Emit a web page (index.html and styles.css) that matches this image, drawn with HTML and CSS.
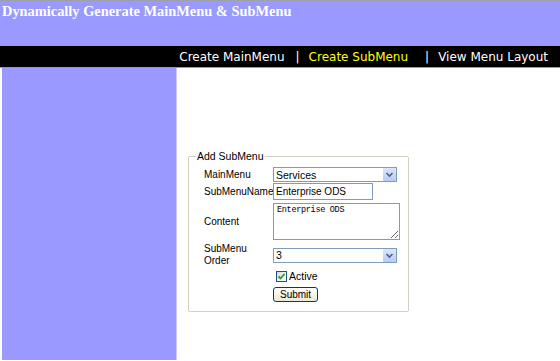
FILE: index.html
```html
<!DOCTYPE html>
<html lang="en">
<head>
  <meta charset="UTF-8">
  <title>Dynamically Generate MainMenu &amp; SubMenu</title>
  <link rel="stylesheet" href="styles.css">
</head>
<body>
  <div class="header">
    <h1>Dynamically Generate MainMenu &amp; SubMenu</h1>
  </div>
  <div class="nav">
    <a href="#" class="nav-link">Create MainMenu</a>
    <span class="sep">|</span>
    <a href="#" class="nav-link active">Create SubMenu</a>
    <span class="sep wide">|</span>
    <a href="#" class="nav-link">View Menu Layout</a>
  </div>
  <div class="main">
    <div class="sidebar"></div>
    <div class="content">
      <form class="submenu-form" action="#" method="post">
        <fieldset class="box">
          <legend>Add SubMenu</legend>
          <div class="rows">
            <label for="mainmenu">MainMenu</label>
            <div class="select-wrap">
              <select id="mainmenu" class="select">
                <option>Services</option>
              </select>
              <span class="arrow">
                <svg width="13" height="13" viewBox="0 0 13 13"><path d="M3.5 5 L6.5 8 L9.5 5" fill="none" stroke="#4d6185" stroke-width="1.6"/></svg>
              </span>
            </div>

            <label for="subname">SubMenuName</label>
            <div><input id="subname" class="text" type="text" value="Enterprise ODS"></div>

            <label for="content">Content</label>
            <div class="area-wrap"><textarea id="content" class="area">Enterprise ODS</textarea></div>

            <label for="order">SubMenu<br>Order</label>
            <div class="select-wrap">
              <select id="order" class="select">
                <option>3</option>
              </select>
              <span class="arrow">
                <svg width="13" height="13" viewBox="0 0 13 13"><path d="M3.5 5 L6.5 8 L9.5 5" fill="none" stroke="#4d6185" stroke-width="1.6"/></svg>
              </span>
            </div>

            <span></span>
            <div class="check-row">
              <span class="check">
                <svg width="9" height="9" viewBox="0 0 9 9"><path d="M1.5 4.5 L3.5 6.5 L7.5 2" fill="none" stroke="#21a121" stroke-width="1.8"/></svg>
              </span>
              <span>Active</span>
            </div>

            <span></span>
            <div><button type="submit" class="btn">Submit</button></div>
          </div>
        </fieldset>
      </form>
    </div>
  </div>
</body>
</html>
```

FILE: styles.css
```css
body {
  margin: 0;
  background: #fff;
  font-family: "DejaVu Sans", Verdana, sans-serif;
}
.header {
  height: 46px;
  background: #9999ff;
  border-top: 1px solid #a0a0a8;
  box-sizing: border-box;
}
.header h1 {
  margin: 0;
  padding: 2px 0 0 2px;
  font-family: "Liberation Serif", "Times New Roman", serif;
  font-size: 14.4px;
  font-weight: bold;
  color: #fff;
}
.nav {
  height: 22px;
  background: #000;
  border-bottom: 1px solid #9a9a9a;
  display: flex;
  justify-content: flex-end;
  align-items: center;
  padding-right: 12px;
  font-size: 12px;
  box-sizing: border-box;
}
.nav-link {
  color: #fff;
  text-decoration: none;
}
.nav-link.active {
  color: #ffff00;
}
.sep {
  color: #fff;
  margin: 0 9px 0 11px;
}
.sep.wide {
  margin-left: 17px;
}
.main {
  display: flex;
  padding-left: 2px;
  min-height: 292px;
}
.sidebar {
  width: 174px;
  background: #9999ff;
  border-right: 1px solid #c8c8ff;
}
.content {
  padding: 82px 0 0 11px;
}
.box {
  margin: 0;
  width: 219px;
  box-sizing: border-box;
  border: 1px solid #d0d0c4;
  border-radius: 2px;
  padding: 5px 8px 9px 15px;
  font-family: "Liberation Sans", Tahoma, sans-serif;
  font-size: 10px;
  line-height: 12px;
  color: #000;
}
.box legend {
  padding: 0 1px;
  margin-left: -8px;
  font-size: 10.5px;
}
.rows {
  display: grid;
  grid-template-columns: 69px 1fr;
  row-gap: 1px;
  align-items: center;
}
.select-wrap {
  position: relative;
  width: 124px;
}
.select {
  display: block;
  appearance: none;
  width: 124px;
  height: 15px;
  margin: 0;
  padding: 0 2px;
  border: 1px solid #7f9db9;
  background: #fff;
  font-family: "Liberation Sans", Tahoma, sans-serif;
  font-size: 10.5px;
  color: #000;
  box-sizing: border-box;
}
.arrow {
  position: absolute;
  top: 1px;
  right: 1px;
  width: 13px;
  height: 13px;
  background: linear-gradient(#dbe6fb, #b8cbf5);
  border-radius: 1px;
  display: flex;
}
.text {
  display: block;
  width: 100px;
  height: 17px;
  margin: 0;
  padding: 0 2px;
  border: 1px solid #7f9db9;
  font-family: "Liberation Sans", Tahoma, sans-serif;
  font-size: 10px;
  box-sizing: border-box;
}
.area-wrap {
  padding: 2px 0;
}
.area {
  display: block;
  width: 127px;
  height: 37px;
  margin: 0;
  padding: 1px 3px;
  border: 1px solid #7f9db9;
  font-family: "Liberation Mono", "Courier New", monospace;
  font-size: 8.5px;
  letter-spacing: -0.3px;
  color: #000;
  resize: both;
  box-sizing: border-box;
}
.check-row {
  display: flex;
  align-items: center;
  gap: 2px;
  padding: 2px 0 4px 3px;
  font-size: 10.5px;
}
.check {
  width: 11px;
  height: 11px;
  box-sizing: border-box;
  border: 1px solid #1c5180;
  background: linear-gradient(135deg, #dcdcd7, #fff);
  display: flex;
  align-items: center;
  justify-content: center;
}
.btn {
  display: block;
  height: 15px;
  padding: 0 6px;
  border: 1px solid #003c74;
  border-radius: 3px;
  background: linear-gradient(#fff, #ece9d8);
  font-family: "Liberation Sans", Tahoma, sans-serif;
  font-size: 10px;
  color: #000;
  line-height: 12px;
}
```
